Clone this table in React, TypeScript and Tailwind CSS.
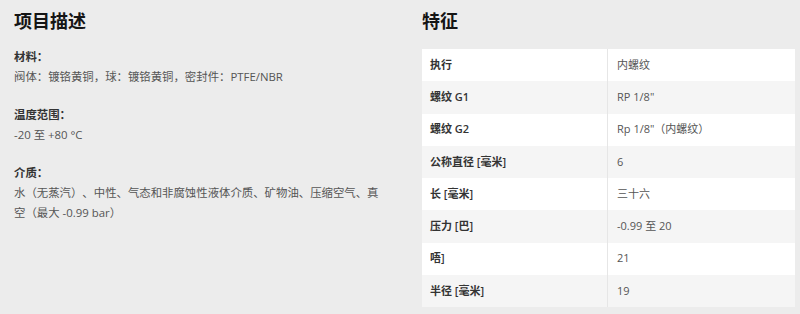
const specs: [string, string][] = [
  ["执行", "内螺纹"],
  ["螺纹 G1", "RP 1/8\""],
  ["螺纹 G2", "Rp 1/8\"（内螺纹）"],
  ["公称直径 [毫米]", "6"],
  ["长 [毫米]", "三十六"],
  ["压力 [巴]", "-0.99 至 20"],
  ["唔]", "21"],
  ["半径 [毫米]", "19"],
];

const details = [
  { label: "材料：", value: "阀体：镀铬黄铜，球：镀铬黄铜，密封件：PTFE/NBR" },
  { label: "温度范围：", value: "-20 至 +80 °C" },
  {
    label: "介质：",
    value: "水（无蒸汽）、中性、气态和非腐蚀性液体介质、矿物油、压缩空气、真空（最大 -0.99 bar）",
  },
];

export default function App() {
  return (
    <div className="flex h-[314px] w-[800px] bg-[#ececec] pl-[14px] pr-[5px] font-['Open_Sans','Noto_Sans_CJK_SC',sans-serif] [text-spacing-trim:space-all]">
      <section className="w-[372px] pt-[9px]">
        <h2 className="text-[18px] font-bold leading-[24px] text-[#151515]">项目描述</h2>
        <div className="mt-[14px] flex flex-col gap-[18px]">
          {details.map((d) => (
            <div key={d.label} className="text-[11.4px] leading-[20px]">
              <p className="font-semibold text-[#333]">{d.label}</p>
              <p className="text-[#555]">{d.value}</p>
            </div>
          ))}
        </div>
      </section>

      <section className="ml-[36px] flex-1 pt-[9px]">
        <h2 className="text-[18px] font-bold leading-[24px] text-[#151515]">特征</h2>
        <div className="mt-[16px] w-[373px]">
          {specs.map(([k, v], i) => (
            <div
              key={k}
              className={`grid h-[32.25px] grid-cols-[186px_1fr] items-center text-[11px] ${
                i % 2 === 0 ? "bg-white" : "bg-[#f5f5f5]"
              }`}
            >
              <div className="flex h-full items-center border-r border-[#e6e6e6] pl-[8px] font-semibold text-[#333]">
                {k}
              </div>
              <div className="pl-[9px] text-[#555]">{v}</div>
            </div>
          ))}
        </div>
      </section>
    </div>
  );
}
